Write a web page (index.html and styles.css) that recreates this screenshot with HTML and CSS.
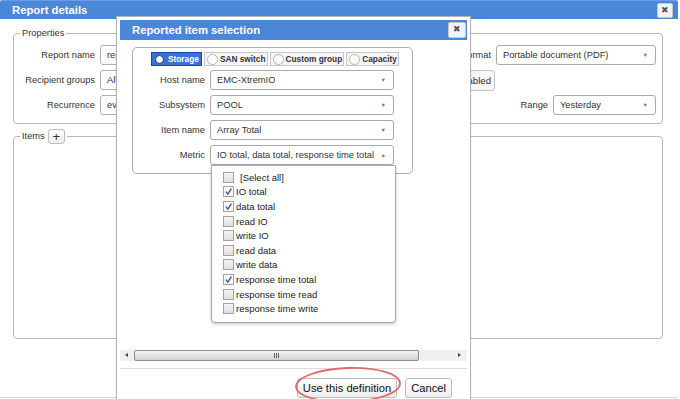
FILE: index.html
```html
<!DOCTYPE html>
<html>
<head>
<meta charset="utf-8">
<title>Report details</title>
<link rel="stylesheet" href="styles.css">
</head>
<body>
<div class="report">
  <div class="titlebar">
    <span class="title">Report details</span>
    <span class="close">&#10006;</span>
  </div>
  <div class="rbody">
    <fieldset class="group props">
      <legend>Properties</legend>
      <div class="prow">
        <label class="plabel">Report name</label>
        <div class="field">report</div>
        <div class="spacer"></div>
        <label class="rlabel">Report format</label>
        <div class="select w160"><span>Portable document (PDF)</span><i class="arr">&#9660;</i></div>
      </div>
      <div class="prow">
        <label class="plabel">Recipient groups</label>
        <div class="field">All</div>
        <div class="spacer"></div>
        <div class="pbtn">Disabled</div>
        <div class="gap161"></div>
      </div>
      <div class="prow">
        <label class="plabel">Recurrence</label>
        <div class="field">every day</div>
        <div class="spacer"></div>
        <label class="rlabel">Range</label>
        <div class="select w103"><span>Yesterday</span><i class="arr">&#9660;</i></div>
      </div>
    </fieldset>
    <fieldset class="group items">
      <legend><span class="ltext">Items</span><span class="plus">+</span></legend>
    </fieldset>
  </div>
</div>

<div class="modal">
  <div class="mtitle">
    <span class="title">Reported item selection</span>
    <span class="close">&#10006;</span>
  </div>
  <div class="mbody">
    <div class="panel">
      <div class="tabs">
        <span class="tab on"><i class="radio"></i>Storage</span>
        <span class="tab"><i class="radio"></i>SAN switch</span>
        <span class="tab"><i class="radio"></i>Custom group</span>
        <span class="tab"><i class="radio"></i>Capacity</span>
      </div>
      <div class="frow"><label>Host name</label><div class="select w184"><span>EMC-XtremIO</span><i class="arr">&#9660;</i></div></div>
      <div class="frow"><label>Subsystem</label><div class="select w184"><span>POOL</span><i class="arr">&#9660;</i></div></div>
      <div class="frow"><label>Item name</label><div class="select w184"><span>Array Total</span><i class="arr">&#9660;</i></div></div>
      <div class="frow"><label>Metric</label>
        <div class="select w184 open"><span>IO total, data total, response time total</span><i class="arr">&#9650;</i>
          <ul class="dropdown">
            <li><i class="cb"></i><span class="sa">[Select all]</span></li>
            <li><i class="cb on"><svg viewBox="0 0 10 10"><path d="M2 5 L4.2 8 L8.2 1.8"/></svg></i>IO total</li>
            <li><i class="cb on"><svg viewBox="0 0 10 10"><path d="M2 5 L4.2 8 L8.2 1.8"/></svg></i>data total</li>
            <li><i class="cb"></i>read IO</li>
            <li><i class="cb"></i>write IO</li>
            <li><i class="cb"></i>read data</li>
            <li><i class="cb"></i>write data</li>
            <li><i class="cb on"><svg viewBox="0 0 10 10"><path d="M2 5 L4.2 8 L8.2 1.8"/></svg></i>response time total</li>
            <li><i class="cb"></i>response time read</li>
            <li><i class="cb"></i>response time write</li>
          </ul>
        </div>
      </div>
    </div>
  </div>
  <div class="hscroll">
    <div class="sbarrow left"></div>
    <div class="thumb"><span class="grip"></span></div>
    <div class="track"><div class="sbarrow right"></div></div>
  </div>
  <div class="mfoot">
    <span class="mbtn use">Use this definition</span>
    <span class="mbtn">Cancel</span>
  </div>
</div>

<svg class="ring" width="130" height="40" viewBox="0 0 130 40">
  <ellipse cx="60" cy="22" rx="52" ry="17" transform="rotate(-2 60 22)" fill="none" stroke="#e06a6a" stroke-width="1.8"/>
</svg>
</body>
</html>
```

FILE: styles.css
```css
* { box-sizing: border-box; }
html, body {
  margin: 0;
  padding: 0;
  width: 680px;
  height: 399px;
  overflow: hidden;
  background: #ffffff;
  font-family: "Liberation Sans", Arial, sans-serif;
  font-size: 9.3px;
  color: #333;
}

.report {
  width: 678px;
  height: 398px;
  border-bottom: 1px solid #d4d4d4;
  background: #fff;
}

.titlebar {
  height: 19px;
  background: #4b87d9;
  border-top: 1px solid #6b9de3;
  border-radius: 2px 2px 0 0;
  display: flex;
  align-items: center;
  justify-content: space-between;
  padding: 0 5px 0 12px;
}
.title {
  color: #fff;
  font-weight: bold;
  font-size: 11.3px;
}
.close {
  width: 16px;
  height: 15px;
  background: #f3f3f3;
  border: 1px solid #c8c8c8;
  border-radius: 2px;
  color: #555;
  font-size: 9px;
  line-height: 13px;
  text-align: center;
}

.rbody {
  padding: 0 15px 0 13px;
}

.group {
  margin: 0;
  border: 1px solid #b9b9b9;
  border-radius: 4px;
  padding: 5px 6px 8px 6px;
}
.group legend {
  padding: 0 2px;
  line-height: 14px;
  font-size: 9.3px;
  color: #333;
}
.props {
  margin-top: 7px;
  padding-top: 5px;
}

.prow {
  display: flex;
  align-items: center;
  height: 20px;
  margin-bottom: 5px;
}
.prow:last-child { margin-bottom: 0; }
.plabel {
  width: 75px;
  text-align: right;
  margin-right: 5px;
  white-space: nowrap;
}
.field {
  width: 250px;
  height: 20px;
  border: 1px solid #b0b0b0;
  border-radius: 3px;
  padding-left: 6px;
  line-height: 18px;
}
.spacer { flex: 1; }
.rlabel {
  margin-right: 5px;
  white-space: nowrap;
}
.pbtn {
  height: 21px;
  padding: 0 3px 0 8px;
  border: 1px solid #c4c4c4;
  border-radius: 3px;
  background: #f6f6f6;
  line-height: 19px;
  font-size: 9.6px;
}
.gap161 { width: 161px; }

.select {
  position: relative;
  height: 20px;
  border: 1px solid #a9a9a9;
  border-radius: 3px;
  background: #fff;
  display: flex;
  align-items: center;
  justify-content: space-between;
  padding: 0 7px 0 6px;
  white-space: nowrap;
}
.select span { overflow: hidden; }
.arr {
  font-style: normal;
  font-size: 5.5px;
  color: #777;
  margin-left: 4px;
}
.w160 { width: 160px; }
.w103 { width: 103px; }
.w184 { width: 184px; }

.items {
  margin-top: 5px;
  height: 210px;
  padding-top: 0;
}
.items legend {
  display: flex;
  align-items: center;
  line-height: 15px;
}
.plus {
  display: inline-block;
  width: 17px;
  height: 15px;
  margin-left: 3px;
  border: 1px solid #bdbdbd;
  border-radius: 3px;
  background: linear-gradient(#ffffff, #ececec);
  text-align: center;
  font-size: 13px;
  line-height: 13px;
  color: #333;
}

/* modal */
.modal {
  position: absolute;
  left: 116px;
  top: 16px;
  width: 355px;
  height: 400px;
  border: 1px solid #b4b4b4;
  background: #fff;
  padding: 3px;
  box-shadow: 0 0 2px rgba(0,0,0,0.1);
}
.mtitle {
  height: 20px;
  background: #4b87d9;
  display: flex;
  align-items: center;
  justify-content: space-between;
  padding: 0 1px 0 12px;
}
.mtitle .close {
  width: 18px;
  height: 16px;
}
.mbody {
  height: 310px;
  padding: 7px 0 0 12px;
}
.panel {
  width: 281px;
  height: 127px;
  border: 1px solid #adadad;
  border-radius: 5px;
  padding-top: 4px;
}
.tabs {
  display: flex;
  gap: 2px;
  margin-left: 18px;
  height: 14px;
}
.tab {
  display: flex;
  align-items: center;
  height: 14px;
  padding: 0 1px 0 2px;
  border: 1px solid #c6c6c6;
  background: #f5f5f5;
  font-weight: bold;
  font-size: 8.3px;
  color: #333;
  white-space: nowrap;
}
.tab.on {
  background: #3a73d6;
  border-color: #1b47a3;
  color: #fff;
  padding-right: 2px;
}
.radio {
  width: 11px;
  height: 11px;
  border-radius: 50%;
  border: 1px solid #b5b5b5;
  background: #fff;
  margin-right: 2px;
  flex: none;
}
.tab.on .radio {
  width: 9px;
  height: 9px;
  border: 1px solid #123a8c;
  margin: 0 4px 0 1px;
}

.frow {
  display: flex;
  align-items: center;
  height: 20px;
  margin-top: 5px;
}
.tabs + .frow { margin-top: 4px; }
.frow label {
  width: 72px;
  text-align: right;
  margin-right: 5px;
  white-space: nowrap;
}

.dropdown {
  position: absolute;
  left: 0;
  top: 19px;
  width: 185px;
  height: 158px;
  margin: 0;
  padding: 4px 0 0 11px;
  list-style: none;
  background: #fff;
  border: 1px solid #ababab;
  border-radius: 0 0 4px 4px;
  box-shadow: 0 1px 3px rgba(0,0,0,0.25);
  z-index: 2;
}
.dropdown li {
  display: flex;
  align-items: center;
  height: 14.6px;
  font-size: 9.5px;
  color: #222;
}
.cb {
  width: 11px;
  height: 11px;
  border: 1px solid #a3a3a3;
  background: linear-gradient(#f4f4f4, #dedede);
  margin-right: 2px;
  flex: none;
  display: flex;
}
.cb.on { background: #f8f8f8; }
.cb svg { width: 9px; height: 9px; }
.cb path {
  fill: none;
  stroke: #2d4f9e;
  stroke-width: 1.4;
}
.sa { margin-left: 4px; }

/* scrollbar */
.hscroll {
  height: 11px;
  display: flex;
  background: #f0f0f0;
}
.sbarrow {
  width: 12px;
  height: 11px;
  position: relative;
}
.sbarrow::after {
  content: "";
  position: absolute;
  top: 3px;
  border-top: 2.5px solid transparent;
  border-bottom: 2.5px solid transparent;
}
.sbarrow.left::after {
  left: 5px;
  border-right: 3px solid #444;
}
.sbarrow.right::after {
  left: 3px;
  border-left: 3px solid #444;
}
.thumb {
  margin-left: 2px;
  width: 285px;
  height: 11px;
  border: 1px solid #8f8f8f;
  border-radius: 2px;
  background: linear-gradient(#f4f4f4, #d0d0d0);
  display: flex;
  align-items: center;
  justify-content: center;
}
.grip {
  width: 5px;
  height: 5px;
  border-left: 1px solid #666;
  border-right: 1px solid #666;
  position: relative;
}
.grip::after {
  content: "";
  position: absolute;
  left: 1px;
  top: 0;
  width: 1px;
  height: 5px;
  background: #666;
}
.track {
  flex: 1;
  display: flex;
  justify-content: flex-end;
}

.mfoot {
  margin-top: 7px;
  border-top: 1px solid #dcdcdc;
  padding: 9px 15px 0 0;
  display: flex;
  justify-content: flex-end;
  gap: 8px;
}
.mbtn {
  height: 20px;
  padding: 0 5px;
  border: 1px solid #bcbcbc;
  border-radius: 3px;
  background: linear-gradient(#ffffff, #ededed);
  font-size: 11.2px;
  line-height: 18px;
  color: #111;
}

.ring {
  position: absolute;
  left: 288px;
  top: 363px;
  pointer-events: none;
}
```
